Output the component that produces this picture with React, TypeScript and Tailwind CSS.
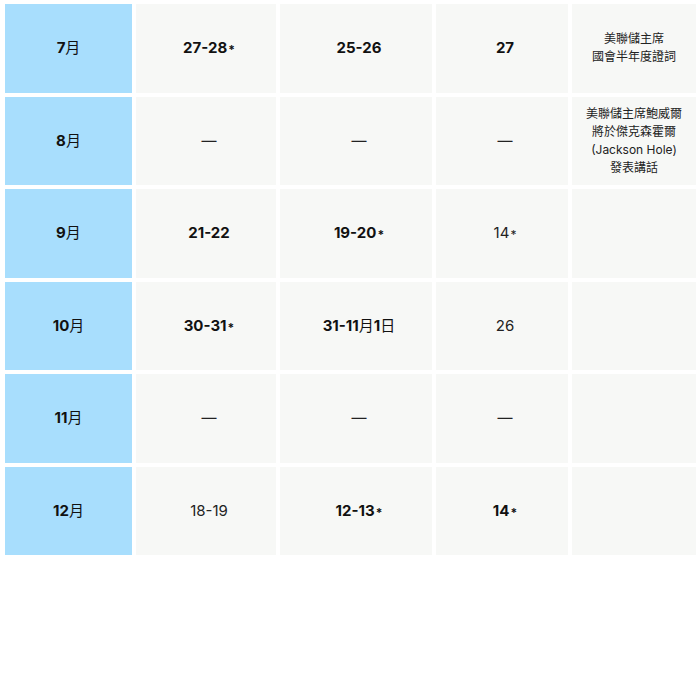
const rows: { month: string; cells: { text: string; bold: boolean; star?: boolean }[]; note?: string[] }[] = [
  {
    month: "7月",
    cells: [
      { text: "27-28", bold: true, star: true },
      { text: "25-26", bold: true },
      { text: "27", bold: true },
    ],
    note: ["美聯儲主席", "國會半年度證詞"],
  },
  {
    month: "8月",
    cells: [
      { text: "—", bold: false },
      { text: "—", bold: false },
      { text: "—", bold: false },
    ],
    note: ["美聯儲主席鮑威爾", "將於傑克森霍爾", "(Jackson Hole)", "發表講話"],
  },
  {
    month: "9月",
    cells: [
      { text: "21-22", bold: true },
      { text: "19-20", bold: true, star: true },
      { text: "14", bold: false, star: true },
    ],
  },
  {
    month: "10月",
    cells: [
      { text: "30-31", bold: true, star: true },
      { text: "31-11月1日", bold: true },
      { text: "26", bold: false },
    ],
  },
  {
    month: "11月",
    cells: [
      { text: "—", bold: false },
      { text: "—", bold: false },
      { text: "—", bold: false },
    ],
  },
  {
    month: "12月",
    cells: [
      { text: "18-19", bold: false },
      { text: "12-13", bold: true, star: true },
      { text: "14", bold: true, star: true },
    ],
  },
];

// CJK glyphs render in regular weight next to bold digits
function Mixed({ text }: { text: string }) {
  return (
    <>
      {text.split(/([月日])/).map((part, i) =>
        part === "月" || part === "日" ? (
          <span key={i} className="font-normal">
            {part}
          </span>
        ) : (
          <span key={i}>{part}</span>
        )
      )}
    </>
  );
}

export default function App() {
  return (
    <div
      className="w-[700px] h-[700px] bg-white pt-[4px] pl-[5px] text-[#111]"
      style={{ fontFamily: 'Inter, "Noto Sans CJK TC", sans-serif' }}
    >
      <div className="grid grid-cols-[127px_140px_152px_132px_124px] auto-rows-[88.5px] gap-[4px]">
        {rows.map((row) => (
          <div key={row.month} className="contents">
            <div className="bg-[#a8defd] flex items-center justify-center text-[15px] font-bold">
              <Mixed text={row.month} />
            </div>
            {row.cells.map((cell, i) => (
              <div
                key={i}
                className={
                  "bg-[#f7f8f6] flex items-center justify-center pl-[6px] text-[15px] " +
                  (cell.bold ? "font-bold" : "font-normal text-[#222]")
                }
              >
                <Mixed text={cell.text} />
                {cell.star && <span className="text-[12px] ml-[1px] translate-y-[2px]">*</span>}
              </div>
            ))}
            <div className="bg-[#f7f8f6] flex flex-col items-center justify-center text-[12px] leading-[18px] text-[#222]">
              {row.note?.map((line) => (
                <span key={line}>{line}</span>
              ))}
            </div>
          </div>
        ))}
      </div>
    </div>
  );
}
